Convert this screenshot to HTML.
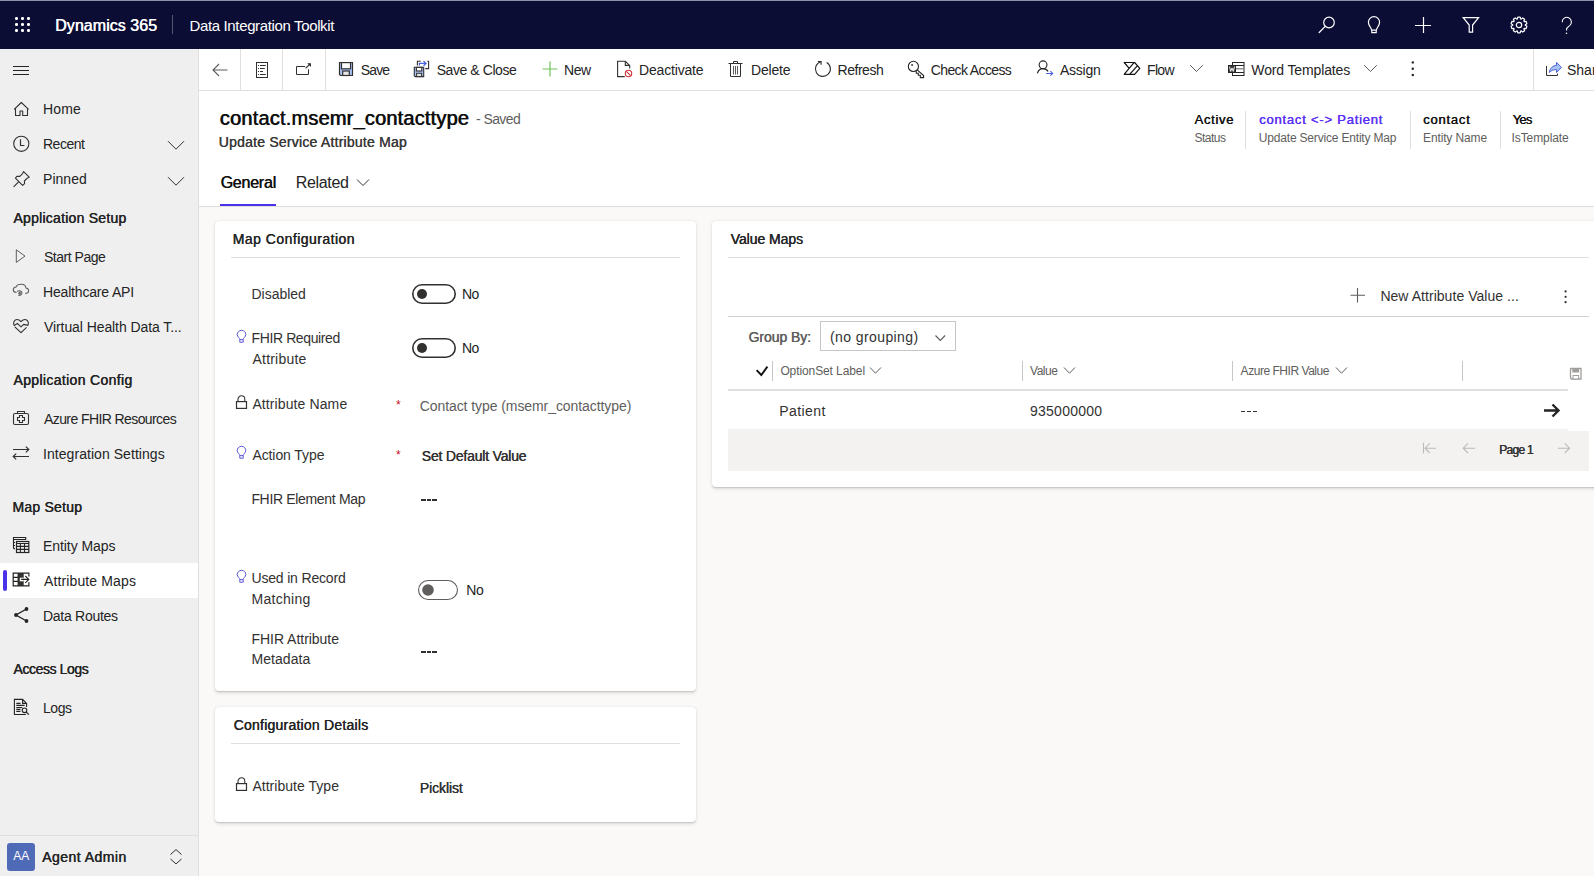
<!DOCTYPE html>
<html><head><meta charset="utf-8"><title>Dynamics 365</title>
<style>
*{box-sizing:border-box;margin:0;padding:0}
html,body{width:1594px;height:876px;overflow:hidden;background:#faf9f8;font-family:"Liberation Sans",sans-serif;color:#242424}
.a{position:absolute;white-space:nowrap;line-height:1}
.b{position:absolute}
svg{position:absolute;overflow:visible}
</style></head><body>
<div class="b" style="left:0px;top:0px;width:1594px;height:49px;background:#0c0d35"></div>
<div class="b" style="left:0px;top:0px;width:1594px;height:1px;background:#8c93a6"></div>
<div class="b" style="left:172px;top:15px;width:1px;height:19px;background:#55566f"></div>
<div class="b" style="left:0px;top:49px;width:198px;height:827px;background:#efefef"></div>
<div class="b" style="left:198px;top:49px;width:1px;height:827px;background:#e1dfdd"></div>
<div class="b" style="left:0px;top:563px;width:198px;height:35px;background:#fff"></div>
<div class="b" style="left:3px;top:570px;width:4px;height:21px;background:#4a32ea;border-radius:2px"></div>
<div class="b" style="left:0px;top:835px;width:198px;height:1px;background:#e1dfdd"></div>
<div class="b" style="left:7px;top:843px;width:28px;height:28px;background:#4f6bb8;border-radius:3px"></div>
<div class="b" style="left:199px;top:49px;width:1395px;height:41px;background:#fff"></div>
<div class="b" style="left:199px;top:90px;width:1395px;height:1px;background:#e1dfdd"></div>
<div class="b" style="left:240px;top:49px;width:1px;height:41px;background:#e1dfdd"></div>
<div class="b" style="left:282px;top:49px;width:1px;height:41px;background:#e1dfdd"></div>
<div class="b" style="left:325px;top:49px;width:1px;height:41px;background:#e1dfdd"></div>
<div class="b" style="left:1533px;top:49px;width:1px;height:41px;background:#e1dfdd"></div>
<div class="b" style="left:199px;top:91px;width:1395px;height:115px;background:#fff"></div>
<div class="b" style="left:199px;top:206px;width:1395px;height:1px;background:#e1dfdd"></div>
<div class="b" style="left:220px;top:203.5px;width:56px;height:2.5px;background:#4a32ea"></div>
<div class="b" style="left:1245px;top:111px;width:1px;height:38px;background:#e1dfdd"></div>
<div class="b" style="left:1410px;top:111px;width:1px;height:38px;background:#e1dfdd"></div>
<div class="b" style="left:1500px;top:111px;width:1px;height:38px;background:#e1dfdd"></div>
<div class="b" style="left:215px;top:221px;width:481px;height:470px;background:#fff;border-radius:4px;box-shadow:0 1.6px 3.6px rgba(0,0,0,.13),0 0.3px 0.9px rgba(0,0,0,.11)"></div>
<div class="b" style="left:215px;top:707px;width:481px;height:115px;background:#fff;border-radius:4px;box-shadow:0 1.6px 3.6px rgba(0,0,0,.13),0 0.3px 0.9px rgba(0,0,0,.11)"></div>
<div class="b" style="left:712px;top:221px;width:893px;height:266px;background:#fff;border-radius:4px;box-shadow:0 1.6px 3.6px rgba(0,0,0,.13),0 0.3px 0.9px rgba(0,0,0,.11)"></div>
<div class="b" style="left:231px;top:257px;width:449px;height:1px;background:#e1dfdd"></div>
<div class="b" style="left:231px;top:743px;width:449px;height:1px;background:#e1dfdd"></div>
<div class="b" style="left:728px;top:257px;width:861px;height:1px;background:#e1dfdd"></div>
<div class="b" style="left:728px;top:316px;width:861px;height:1px;background:#d2d0ce"></div>
<div class="a" style="left:396px;top:398.5px;font-size:12px;color:#c50f1f">*</div>
<div class="a" style="left:396px;top:448.5px;font-size:12px;color:#c50f1f">*</div>
<div class="b" style="left:421px;top:499px;width:4.6px;height:2px;background:#323130"></div>
<div class="b" style="left:426.8px;top:499px;width:4.3px;height:2px;background:#323130"></div>
<div class="b" style="left:432.4px;top:499px;width:4.5px;height:2px;background:#323130"></div>
<div class="b" style="left:421px;top:651px;width:4.6px;height:2px;background:#323130"></div>
<div class="b" style="left:426.8px;top:651px;width:4.3px;height:2px;background:#323130"></div>
<div class="b" style="left:432.4px;top:651px;width:4.5px;height:2px;background:#323130"></div>
<div class="b" style="left:820px;top:321px;width:136px;height:30px;border:1px solid #c8c6c4;background:#fff"></div>
<div class="b" style="left:772px;top:361px;width:1px;height:20px;background:#c8c6c4"></div>
<div class="b" style="left:1022px;top:361px;width:1px;height:20px;background:#c8c6c4"></div>
<div class="b" style="left:1232px;top:361px;width:1px;height:20px;background:#c8c6c4"></div>
<div class="b" style="left:1462px;top:361px;width:1px;height:20px;background:#c8c6c4"></div>
<div class="b" style="left:728px;top:389px;width:840px;height:2px;background:#e1dfdd"></div>
<div class="b" style="left:1241px;top:410.8px;width:4.1px;height:1.3px;background:#323130"></div>
<div class="b" style="left:1246.9px;top:410.8px;width:4.1px;height:1.3px;background:#323130"></div>
<div class="b" style="left:1252.8px;top:410.8px;width:4.2px;height:1.3px;background:#323130"></div>
<div class="b" style="left:728px;top:429px;width:840px;height:41.5px;background:#f3f2f1"></div>
<div class="b" style="left:1568px;top:431px;width:21px;height:39.5px;background:#f3f2f1"></div>
<svg style="left:0px;top:0px" width="48" height="48" viewBox="0 0 48 48"><rect x="15" y="17" width="3" height="3" rx="1.2" fill="#fff"/><rect x="15" y="23" width="3" height="3" rx="1.2" fill="#fff"/><rect x="15" y="29" width="3" height="3" rx="1.2" fill="#fff"/><rect x="21" y="17" width="3" height="3" rx="1.2" fill="#fff"/><rect x="21" y="23" width="3" height="3" rx="1.2" fill="#fff"/><rect x="21" y="29" width="3" height="3" rx="1.2" fill="#fff"/><rect x="27" y="17" width="3" height="3" rx="1.2" fill="#fff"/><rect x="27" y="23" width="3" height="3" rx="1.2" fill="#fff"/><rect x="27" y="29" width="3" height="3" rx="1.2" fill="#fff"/></svg>
<svg style="left:1317px;top:15px" width="20" height="20" viewBox="0 0 20 20"><circle cx="12" cy="7.5" r="5.3" fill="none" stroke="#fff" stroke-width="1.2"/><path d="M8.2 11.3 L2.2 17.5" fill="none" stroke="#fff" stroke-width="1.2" stroke-linecap="round"/></svg>
<svg style="left:1366px;top:15px" width="16" height="20" viewBox="0 0 16 20"><path d="M5.6 15.2 C5.6 12.6 2.4 11 2.4 7.3 A5.6 5.6 0 0 1 13.6 7.3 C13.6 11 10.4 12.6 10.4 15.2 Z" fill="none" stroke="#fff" stroke-width="1.2"/><path d="M5.8 15.5 v2.2 h4.4 v-2.2" fill="none" stroke="#fff" stroke-width="1.2"/></svg>
<svg style="left:1414px;top:16px" width="18" height="18" viewBox="0 0 18 18"><path d="M9.5 1 V17 M1 9.5 H17" fill="none" stroke="#fff" stroke-width="1.2"/></svg>
<svg style="left:1462px;top:16px" width="18" height="18" viewBox="0 0 18 18"><path d="M1.2 1.6 H16.6 L10.6 9 V16.2 H7.2 V9 Z" fill="none" stroke="#fff" stroke-width="1.2"/></svg>
<svg style="left:1510px;top:16px" width="18" height="18" viewBox="0 0 18 18"><path d="M7.37 2.91 L7.82 1.09 L10.18 1.09 L10.63 2.91 L11.26 3.12 L12.69 1.90 L14.61 3.29 L13.90 5.04 L14.28 5.57 L16.16 5.43 L16.89 7.68 L15.29 8.67 L15.29 9.33 L16.89 10.32 L16.16 12.57 L14.28 12.43 L13.90 12.96 L14.61 14.71 L12.69 16.10 L11.26 14.88 L10.63 15.09 L10.18 16.91 L7.82 16.91 L7.37 15.09 L6.74 14.88 L5.31 16.10 L3.39 14.71 L4.10 12.96 L3.72 12.43 L1.84 12.57 L1.11 10.32 L2.71 9.33 L2.71 8.67 L1.11 7.68 L1.84 5.43 L3.72 5.57 L4.10 5.04 L3.39 3.29 L5.31 1.90 L6.74 3.12 Z" fill="none" stroke="#fff" stroke-width="1.2" stroke-linejoin="round"/><circle cx="9" cy="9" r="2.7" fill="none" stroke="#fff" stroke-width="1.2"/></svg>
<svg style="left:1560px;top:16.5px" width="14" height="20" viewBox="0 0 14 20"><path d="M2.2 5.2 A4.6 4.6 0 1 1 9.6 8.6 C7.6 10 6.5 11 6.5 12.6 V13.6" fill="none" stroke="#fff" stroke-width="1.1"/><circle cx="6.5" cy="16.2" r="0.8" fill="#fff"/></svg>
<svg style="left:12px;top:64px" width="18" height="12" viewBox="0 0 18 12"><path d="M1 2.5 H17 M1 6.5 H17 M1 10.5 H17" stroke="#242424" stroke-width="1"/></svg>
<svg style="left:12px;top:100px" width="18" height="18" viewBox="0 0 18 18"><path d="M2.2 9.3 L9.3 2.5 L16.6 9.3 M3.5 8 V15.5 H8 V11 H10.7 V15.5 H15.5 V8" fill="none" stroke="#323130" stroke-width="1.1" stroke-linejoin="round"/></svg>
<svg style="left:12px;top:135px" width="18" height="18" viewBox="0 0 18 18"><circle cx="9.3" cy="8.8" r="7.6" fill="none" stroke="#323130" stroke-width="1.1"/><path d="M8.5 4.3 V10.5 H12.4" fill="none" stroke="#323130" stroke-width="1.2"/></svg>
<svg style="left:12px;top:170px" width="18" height="18" viewBox="0 0 18 18"><path d="M11.6 1.6 L17.2 7.2 L15.2 8.2 L12.4 11 L12.6 13.6 L10.6 15.4 L3.4 8.2 L5.2 6.2 L7.8 6.4 L10.6 3.6 Z M6.6 11.8 L1.6 16.8" fill="none" stroke="#323130" stroke-width="1.1" stroke-linejoin="round"/></svg>
<svg style="left:167px;top:140px" width="18" height="11" viewBox="0 0 18 11"><path d="M1 1.2 L9 9.2 L17 1.2" fill="none" stroke="#323130" stroke-width="1"/></svg>
<svg style="left:167px;top:175.5px" width="18" height="11" viewBox="0 0 18 11"><path d="M1 1.2 L9 9.2 L17 1.2" fill="none" stroke="#323130" stroke-width="1"/></svg>
<svg style="left:14px;top:248px" width="14" height="16" viewBox="0 0 14 16"><path d="M2.3 1.8 V14.4 L11 8.1 Z" fill="none" stroke="#605e5c" stroke-width="1"/></svg>
<svg style="left:12px;top:282px" width="18" height="17" viewBox="0 0 18 17"><path d="M4.5 10.5 C2.5 10.5 1.3 9.2 1.3 7.8 C1.3 6.2 2.4 5.2 4 5 C4.6 3.3 6.5 2.3 9.6 2.3 C12 2.3 13.6 4 14 6 C15.6 6.2 16.6 7.4 16.6 8.8 C16.6 10.2 15.4 11.4 13.3 11.4" fill="none" stroke="#605e5c" stroke-width="1.1"/><path d="M5.2 9.6 C6.2 8.4 9.6 8.5 9.9 10.6 C10.1 12.6 8.5 13.6 6.4 13.4" fill="none" stroke="#605e5c" stroke-width="1.1"/><circle cx="7.6" cy="11.4" r="1.3" fill="#605e5c"/></svg>
<svg style="left:12px;top:318px" width="18" height="16" viewBox="0 0 18 16"><path d="M2 7.2 C0.8 4.5 2.5 1.5 5 1.5 C6.8 1.5 8 2.5 9 3.6 C10 2.5 11.2 1.5 13 1.5 C15.5 1.5 17.2 4.5 16 7.4 M2 7.8 L5.3 5.4 L9 8.8 L11.6 6.4 L16.2 7.4 M2.8 8.8 L9 14.7 L14.6 9.4" fill="none" stroke="#323130" stroke-width="1.1" stroke-linejoin="round"/></svg>
<svg style="left:12px;top:410px" width="18" height="16" viewBox="0 0 18 16"><rect x="1.5" y="3.5" width="15" height="11" rx="1.5" fill="none" stroke="#323130" stroke-width="1.1"/><path d="M5.5 3.5 V1.5 H12.5 V3.5 M7.5 5.5 H10.5 V7.5 H12.5 V10.5 H10.5 V12.5 H7.5 V10.5 H5.5 V7.5 H7.5 Z" fill="none" stroke="#323130" stroke-width="1.1"/></svg>
<svg style="left:12px;top:444px" width="18" height="18" viewBox="0 0 18 18"><path d="M1 5.5 H16.6 M13.8 2.6 L16.8 5.5 L13.8 8.4 M17 12.5 H1.4 M4.2 9.6 L1.2 12.5 L4.2 15.4" fill="none" stroke="#323130" stroke-width="1.2"/></svg>
<svg style="left:12px;top:536px" width="18" height="18" viewBox="0 0 18 18"><path d="M1.5 12.6 V1.5 H13.7 V3.5 H1.5 M1.5 6.5 H3 M1.5 9.5 H3 M1.5 12.6 H3" fill="none" stroke="#242424" stroke-width="1.1"/><rect x="4.5" y="5.5" width="12.3" height="11" fill="#efefef" stroke="#242424" stroke-width="1.2"/><path d="M4.5 7.5 H16.8 M4.5 10.4 H16.8 M4.5 13.4 H16.8 M8.4 7.5 V16.5 M12.5 7.5 V16.5" fill="none" stroke="#242424" stroke-width="1.1"/></svg>
<svg style="left:12px;top:572px" width="18" height="16" viewBox="0 0 18 16"><rect x="6.2" y="1.1" width="5.5" height="12.7" fill="#323130"/><rect x="7.8" y="5.7" width="3.9" height="3.6" fill="#fff"/><path d="M16.9 4.5 V1.1 H1.2 V13.8 H16.9 V10.2 M1.2 5.3 H6.2 M1.2 9.4 H6.2 M6.2 1.1 V13.8" fill="none" stroke="#242424" stroke-width="1.2"/><path d="M9.1 7.4 H16.4 M13.3 4 L16.8 7.4 L13.3 10.8" fill="none" stroke="#242424" stroke-width="1.1"/></svg>
<svg style="left:12px;top:606px" width="18" height="18" viewBox="0 0 18 18"><path d="M14.5 3 L4 9 L14.5 15" fill="none" stroke="#242424" stroke-width="1.4"/><circle cx="14.5" cy="3" r="1.9" fill="#242424"/><circle cx="4" cy="9" r="1.9" fill="#242424"/><circle cx="14.5" cy="15" r="1.9" fill="#242424"/></svg>
<svg style="left:12px;top:698px" width="18" height="18" viewBox="0 0 18 18"><path d="M13.9 16.5 H2.4 V1.4 H10.6 L14.6 5.4 V9 M10.6 1.4 V5.4 H14.6 M4.3 5.4 H8.5 M4.3 7.4 H12.6 M4.3 9.5 H10.3 M4.3 11.4 H8.5 M4.3 13.4 H8.5" fill="none" stroke="#242424" stroke-width="1.1"/><circle cx="12.5" cy="12.3" r="2.3" fill="#efefef" stroke="#242424" stroke-width="1.1"/><path d="M14.1 14 L16.9 16.6" stroke="#242424" stroke-width="1.2"/></svg>
<svg style="left:168px;top:848px" width="16" height="18" viewBox="0 0 16 18"><path d="M2.5 6.5 L8 1.6 L13.5 6.5 M2.5 11 L8 15.9 L13.5 11" fill="none" stroke="#323130" stroke-width="1"/></svg>
<svg style="left:211px;top:62px" width="18" height="16" viewBox="0 0 18 16"><path d="M2 8 H16.5 M8 2 L2 8 L8 14" fill="none" stroke="#605e5c" stroke-width="1.1"/></svg>
<svg style="left:254px;top:61px" width="16" height="18" viewBox="0 0 16 18"><rect x="2.5" y="1.5" width="11" height="15" fill="none" stroke="#323130" stroke-width="1"/><path d="M4 4.5 H5 M4 7.5 H5 M4 10.5 H5 M4 13.5 H5 M6 4.5 H11.8 M6 7.5 H10.8 M6 10.5 H9 M6 13.5 H11.8" stroke="#323130" stroke-width="1"/></svg>
<svg style="left:294px;top:61px" width="20" height="16" viewBox="0 0 20 16"><path d="M11.2 5.5 H2.5 V13.5 H14.5 V8.3" fill="none" stroke="#323130" stroke-width="1"/><path d="M11.6 7.4 L16 3" stroke="#323130" stroke-width="1.1"/><path d="M13.2 2.2 H17 V6 Z" fill="#323130"/></svg>
<svg style="left:338px;top:61px" width="16" height="16" viewBox="0 0 16 16"><path d="M1.5 1.5 H14.5 V14.5 H2.5 L1.5 13.5 Z" fill="#a6c1f2" stroke="#323130" stroke-width="1.2"/><rect x="3.5" y="1.6" width="9" height="6.2" fill="#fff" stroke="#323130" stroke-width="1.2"/><rect x="4.7" y="10" width="6.6" height="4.5" fill="#e6e6e6" stroke="#323130" stroke-width="1.2"/></svg>
<svg style="left:412px;top:59px" width="20" height="20" viewBox="0 0 20 20"><path d="M2.3 8.2 H11.7 V17.6 H3.2 L2.3 16.7 Z" fill="#a6c1f2" stroke="#323130" stroke-width="1.1"/><rect x="4.4" y="8.4" width="5.4" height="3.6" fill="#fff" stroke="#323130" stroke-width="1.1"/><rect x="4.6" y="14.3" width="5" height="3.3" fill="#e6e6e6" stroke="#323130" stroke-width="1"/><path d="M5.4 6.5 V2.3 H8.7 M15.3 2.3 H16.6 V9.6 H13.3" fill="none" stroke="#323130" stroke-width="1.1"/><path d="M7.4 6.5 V4.4 H14 M11.5 2 L14.1 4.4 L11.5 6.8" fill="none" stroke="#4a62d8" stroke-width="1.2"/></svg>
<svg style="left:541px;top:60px" width="18" height="18" viewBox="0 0 18 18"><path d="M9 1.5 V16.5 M1.5 9 H16.5" stroke="#6fc45a" stroke-width="1.2"/></svg>
<svg style="left:616px;top:60px" width="18" height="18" viewBox="0 0 18 18"><path d="M8.8 16.6 H1.6 V1.3 H9.3 L13.7 5.4 V8.6 M9.3 1.3 V5.4 H13.7" fill="none" stroke="#323130" stroke-width="1.1"/><circle cx="12.5" cy="13.5" r="3.2" fill="#fff" stroke="#d13438" stroke-width="1.1"/><path d="M10.3 11.3 L14.7 15.7" stroke="#d13438" stroke-width="1.1"/></svg>
<svg style="left:727px;top:60px" width="18" height="18" viewBox="0 0 18 18"><path d="M3.5 4 V16.5 H13.5 V4 M1.5 3.5 H15.5 M6.5 3.5 V1.5 H10.5 V3.5" fill="none" stroke="#323130" stroke-width="1"/><path d="M6.5 6 V14.5 M8.5 6 V14.5 M10.5 6 V14.5" stroke="#323130" stroke-width="0.8"/></svg>
<svg style="left:813px;top:60px" width="18" height="18" viewBox="0 0 18 18"><path d="M13.65 2.4 A7.5 7.5 0 1 1 7.96 1.66" fill="none" stroke="#323130" stroke-width="1.1"/><path d="M4.8 1.5 H8.1 V4.8" fill="none" stroke="#323130" stroke-width="1.1"/></svg>
<svg style="left:906px;top:60px" width="20" height="18" viewBox="0 0 20 18"><circle cx="7.4" cy="6.4" r="5.1" fill="none" stroke="#242424" stroke-width="1.1"/><rect x="5.3" y="4.2" width="1.6" height="1.6" fill="#242424"/><path d="M11.2 9.8 L17.6 15.6 V17.6 H14.3 V15.3 H12.3 V13.3 H10.3 V11.2" fill="none" stroke="#242424" stroke-width="1.1"/></svg>
<svg style="left:1036px;top:60px" width="20" height="18" viewBox="0 0 20 18"><circle cx="7.05" cy="4.8" r="3.9" fill="none" stroke="#242424" stroke-width="1.1"/><path d="M1.4 13.3 C2.4 10 4.6 8.6 7 8.6 C9 8.6 11 9.6 12.1 11.6" fill="none" stroke="#242424" stroke-width="1.1"/><path d="M10.1 13.45 H16.6 M14.4 11.2 L16.7 13.45 L14.4 15.7" fill="none" stroke="#4a62d8" stroke-width="1.1"/></svg>
<svg style="left:1122px;top:60px" width="20" height="18" viewBox="0 0 20 18"><path d="M2.2 2.5 H12.6 L17.8 8.4 L12.6 14.3 H2.3 M2.2 2.5 L6.8 7.8 M12 2.6 L2.3 14.1 M15.1 6.1 L7.6 14.3" fill="none" stroke="#111" stroke-width="1.2" stroke-linejoin="round" stroke-linecap="round"/></svg>
<svg style="left:1189px;top:64px" width="16" height="10" viewBox="0 0 16 10"><path d="M1.2 1.2 L7.5 7.5 L13.8 1.2" fill="none" stroke="#605e5c" stroke-width="1"/></svg>
<svg style="left:1226px;top:60px" width="20" height="18" viewBox="0 0 20 18"><rect x="6.5" y="2.5" width="11.5" height="13" fill="#fff" stroke="#242424" stroke-width="1"/><path d="M6.5 5.5 H18 M6.5 12.5 H18" stroke="#242424" stroke-width="1"/><path d="M9.5 8.8 H17.5" stroke="#808080" stroke-width="1.3"/><rect x="2.5" y="5.5" width="7" height="7" fill="#3a3a3a" stroke="#242424" stroke-width="1"/><path d="M3.5 6.6 L4.7 11.4 L6 8 L7.3 11.4 L8.5 6.6" fill="none" stroke="#fff" stroke-width="0.9"/></svg>
<svg style="left:1363px;top:64px" width="16" height="10" viewBox="0 0 16 10"><path d="M1.2 1.2 L7.5 7.5 L13.8 1.2" fill="none" stroke="#605e5c" stroke-width="1"/></svg>
<svg style="left:1410px;top:60px" width="6" height="18" viewBox="0 0 6 18"><circle cx="2.8" cy="2.4" r="1.2" fill="#242424"/><circle cx="2.8" cy="8.7" r="1.2" fill="#242424"/><circle cx="2.8" cy="15" r="1.2" fill="#242424"/></svg>
<svg style="left:1544px;top:60px" width="20" height="18" viewBox="0 0 20 18"><path d="M2.5 6 V15.5 H13.5 V13.6" fill="none" stroke="#323130" stroke-width="1"/><path d="M5.3 12.5 C5.8 8.5 8.5 5.6 12.5 5.3 V2.3 L17.4 7.4 L12.5 12.5 V9.6 C9.5 9.6 7 10.5 5.3 12.5 Z" fill="#a6c1f2" stroke="#4a62d8" stroke-width="1" stroke-linejoin="round"/></svg>
<svg style="left:356px;top:178px" width="14" height="10" viewBox="0 0 14 10"><path d="M1 1.5 L7 7.5 L13 1.5" fill="none" stroke="#323130" stroke-width="1"/></svg>
<svg style="left:412px;top:284px" width="44" height="20" viewBox="0 0 44 20"><rect x="0.8" y="0.8" width="42.4" height="18.4" rx="9.2" fill="#fff" stroke="#323130" stroke-width="1.6"/><circle cx="10" cy="10.0" r="5" fill="#323130"/></svg>
<svg style="left:412px;top:338px" width="44" height="20" viewBox="0 0 44 20"><rect x="0.8" y="0.8" width="42.4" height="18.4" rx="9.2" fill="#fff" stroke="#323130" stroke-width="1.6"/><circle cx="10" cy="10.0" r="5" fill="#323130"/></svg>
<svg style="left:418px;top:580px" width="40" height="20" viewBox="0 0 40 20"><rect x="0.55" y="0.55" width="38.9" height="18.9" rx="9.45" fill="#fff" stroke="#605e5c" stroke-width="1.1"/><circle cx="10" cy="10.0" r="5.8" fill="#605e5c"/></svg>
<svg style="left:235.8px;top:329.5px" width="12" height="14" viewBox="0 0 12 14"><path d="M3.8 9.6 C3.8 8 1.2 6.8 1.2 4.6 A4.3 4.3 0 0 1 9.8 4.6 C9.8 6.8 7.2 8 7.2 9.6 Z" fill="none" stroke="#5a55d6" stroke-width="1"/><path d="M3.8 9.6 V12.2 H7.2 V9.6" fill="none" stroke="#5a55d6" stroke-width="1"/></svg>
<svg style="left:235.8px;top:445.5px" width="12" height="14" viewBox="0 0 12 14"><path d="M3.8 9.6 C3.8 8 1.2 6.8 1.2 4.6 A4.3 4.3 0 0 1 9.8 4.6 C9.8 6.8 7.2 8 7.2 9.6 Z" fill="none" stroke="#5a55d6" stroke-width="1"/><path d="M3.8 9.6 V12.2 H7.2 V9.6" fill="none" stroke="#5a55d6" stroke-width="1"/></svg>
<svg style="left:235.8px;top:569.5px" width="12" height="14" viewBox="0 0 12 14"><path d="M3.8 9.6 C3.8 8 1.2 6.8 1.2 4.6 A4.3 4.3 0 0 1 9.8 4.6 C9.8 6.8 7.2 8 7.2 9.6 Z" fill="none" stroke="#5a55d6" stroke-width="1"/><path d="M3.8 9.6 V12.2 H7.2 V9.6" fill="none" stroke="#5a55d6" stroke-width="1"/></svg>
<svg style="left:235px;top:395px" width="13" height="15" viewBox="0 0 13 15"><path d="M3 6.2 V4.2 A3.4 3.4 0 0 1 9.8 4.2 V6.2" fill="none" stroke="#323130" stroke-width="1.1"/><rect x="1.5" y="6.6" width="10" height="6.8" fill="none" stroke="#323130" stroke-width="1.2"/></svg>
<svg style="left:235px;top:777px" width="13" height="15" viewBox="0 0 13 15"><path d="M3 6.2 V4.2 A3.4 3.4 0 0 1 9.8 4.2 V6.2" fill="none" stroke="#323130" stroke-width="1.1"/><rect x="1.5" y="6.6" width="10" height="6.8" fill="none" stroke="#323130" stroke-width="1.2"/></svg>
<svg style="left:1349px;top:286px" width="18" height="18" viewBox="0 0 18 18"><path d="M8.5 2 V16.5 M1.5 9.2 H16" stroke="#605e5c" stroke-width="1.1"/></svg>
<svg style="left:1563px;top:289px" width="6" height="16" viewBox="0 0 6 16"><circle cx="2.6" cy="2.4" r="1.1" fill="#323130"/><circle cx="2.6" cy="7.8" r="1.1" fill="#323130"/><circle cx="2.6" cy="13.2" r="1.1" fill="#323130"/></svg>
<svg style="left:934px;top:334px" width="13" height="9" viewBox="0 0 13 9"><path d="M1.5 1.5 L6.3 6.3 L11.1 1.5" fill="none" stroke="#605e5c" stroke-width="1.2"/></svg>
<svg style="left:755px;top:364px" width="14" height="13" viewBox="0 0 14 13"><path d="M1.6 6.1 L6.3 11 L12.4 2.6" fill="none" stroke="#111" stroke-width="1.9"/></svg>
<svg style="left:869px;top:366px" width="14" height="10" viewBox="0 0 14 10"><path d="M1 1.5 L6.5 7.2 L12 1.5" fill="none" stroke="#605e5c" stroke-width="1"/></svg>
<svg style="left:1063px;top:366px" width="14" height="10" viewBox="0 0 14 10"><path d="M1 1.5 L6.5 7.2 L12 1.5" fill="none" stroke="#605e5c" stroke-width="1"/></svg>
<svg style="left:1335px;top:366px" width="14" height="10" viewBox="0 0 14 10"><path d="M1 1.5 L6.5 7.2 L12 1.5" fill="none" stroke="#605e5c" stroke-width="1"/></svg>
<svg style="left:1569px;top:367px" width="14" height="14" viewBox="0 0 14 14"><path d="M1.5 1.5 H12 V12 H2.5 L1.5 11 Z" fill="#fff" stroke="#a19f9d" stroke-width="1.3"/><rect x="3.3" y="1.5" width="6.8" height="4" fill="#a19f9d"/><rect x="4" y="8.5" width="5.6" height="3.5" fill="#fff" stroke="#a19f9d" stroke-width="1"/></svg>
<svg style="left:1542px;top:402px" width="20" height="16" viewBox="0 0 20 16"><path d="M2 8.5 H16.5 M10.5 2.5 L16.5 8.5 L10.5 14.5" fill="none" stroke="#242424" stroke-width="2.4"/></svg>
<svg style="left:1421px;top:441px" width="16" height="14" viewBox="0 0 16 14"><path d="M2.5 1.8 V12.6 M4 7.2 H15 M8.8 2.4 L4 7.2 L8.8 12" fill="none" stroke="#bdbbb8" stroke-width="1.1"/></svg>
<svg style="left:1461px;top:441px" width="16" height="14" viewBox="0 0 16 14"><path d="M2.2 7.2 H14 M7 2.4 L2.2 7.2 L7 12" fill="none" stroke="#bdbbb8" stroke-width="1.1"/></svg>
<svg style="left:1556px;top:441px" width="16" height="14" viewBox="0 0 16 14"><path d="M1.8 7.2 H13.6 M8.8 2.4 L13.6 7.2 L8.8 12" fill="none" stroke="#bdbbb8" stroke-width="1.1"/></svg>
<div class="a" style="left:55.00px;top:18px;font-size:16px;color:#fff;text-shadow:0.5px 0 0 #fff;letter-spacing:0.048px">Dynamics 365</div>
<div class="a" style="left:189.50px;top:18px;font-size:15px;color:#fff;letter-spacing:-0.359px">Data Integration Toolkit</div>
<div class="a" style="left:43.00px;top:102px;font-size:14px;color:#242424;letter-spacing:0.147px">Home</div>
<div class="a" style="left:43.00px;top:137px;font-size:14px;color:#242424;letter-spacing:-0.494px">Recent</div>
<div class="a" style="left:43.00px;top:172px;font-size:14px;color:#242424;letter-spacing:0.039px">Pinned</div>
<div class="a" style="left:44.00px;top:250px;font-size:14px;color:#242424;letter-spacing:-0.485px">Start Page</div>
<div class="a" style="left:43.00px;top:285px;font-size:14px;color:#242424;letter-spacing:-0.175px">Healthcare API</div>
<div class="a" style="left:44.00px;top:320px;font-size:14px;color:#242424;letter-spacing:-0.083px">Virtual Health Data T...</div>
<div class="a" style="left:44.00px;top:412px;font-size:14px;color:#242424;letter-spacing:-0.591px">Azure FHIR Resources</div>
<div class="a" style="left:43.00px;top:447px;font-size:14px;color:#242424;letter-spacing:0.056px">Integration Settings</div>
<div class="a" style="left:43.00px;top:539px;font-size:14px;color:#242424;letter-spacing:-0.074px">Entity Maps</div>
<div class="a" style="left:44.00px;top:574px;font-size:14px;color:#242424;letter-spacing:0.126px">Attribute Maps</div>
<div class="a" style="left:43.00px;top:609px;font-size:14px;color:#242424;letter-spacing:-0.282px">Data Routes</div>
<div class="a" style="left:43.00px;top:701px;font-size:14px;color:#242424;letter-spacing:-0.453px">Logs</div>
<div class="a" style="left:13.30px;top:211px;font-size:14px;color:#242424;text-shadow:0.4px 0 0 #242424;letter-spacing:0.239px">Application Setup</div>
<div class="a" style="left:13.30px;top:373px;font-size:14px;color:#242424;text-shadow:0.4px 0 0 #242424;letter-spacing:0.349px">Application Config</div>
<div class="a" style="left:12.30px;top:500px;font-size:14px;color:#242424;text-shadow:0.4px 0 0 #242424;letter-spacing:0.222px">Map Setup</div>
<div class="a" style="left:13.30px;top:662px;font-size:14px;color:#242424;text-shadow:0.4px 0 0 #242424;letter-spacing:-0.407px">Access Logs</div>
<div class="a" style="left:13.20px;top:850px;font-size:12px;color:#fff">AA</div>
<div class="a" style="left:42.00px;top:850px;font-size:14px;color:#242424;text-shadow:0.4px 0 0 #242424;letter-spacing:0.463px">Agent Admin</div>
<div class="a" style="left:360.70px;top:63px;font-size:14px;color:#242424;letter-spacing:-0.840px">Save</div>
<div class="a" style="left:436.70px;top:63px;font-size:14px;color:#242424;letter-spacing:-0.430px">Save & Close</div>
<div class="a" style="left:564.00px;top:63px;font-size:14px;color:#242424;letter-spacing:-0.448px">New</div>
<div class="a" style="left:639.00px;top:63px;font-size:14px;color:#242424;letter-spacing:-0.173px">Deactivate</div>
<div class="a" style="left:751.00px;top:63px;font-size:14px;color:#242424;letter-spacing:-0.197px">Delete</div>
<div class="a" style="left:837.50px;top:63px;font-size:14px;color:#242424;letter-spacing:-0.456px">Refresh</div>
<div class="a" style="left:930.80px;top:63px;font-size:14px;color:#242424;letter-spacing:-0.627px">Check Access</div>
<div class="a" style="left:1060.00px;top:63px;font-size:14px;color:#242424;letter-spacing:-0.247px">Assign</div>
<div class="a" style="left:1147.00px;top:63px;font-size:14px;color:#242424;letter-spacing:-0.649px">Flow</div>
<div class="a" style="left:1251.30px;top:63px;font-size:14px;color:#242424;letter-spacing:-0.130px">Word Templates</div>
<div class="a" style="left:1567.00px;top:63px;font-size:14px;color:#242424">Share</div>
<div class="a" style="left:219.60px;top:108px;font-size:20px;color:#111;text-shadow:0.7px 0 0 #111;letter-spacing:0.191px">contact.msemr_contacttype</div>
<div class="a" style="left:476.00px;top:112px;font-size:14px;color:#605e5c;letter-spacing:-0.577px">- Saved</div>
<div class="a" style="left:218.60px;top:135px;font-size:14px;color:#3b3a39;text-shadow:0.4px 0 0 #3b3a39;letter-spacing:0.219px">Update Service Attribute Map</div>
<div class="a" style="left:1194.40px;top:113px;font-size:13px;color:#111;text-shadow:0.4px 0 0 #111;letter-spacing:0.686px">Active</div>
<div class="a" style="left:1194.40px;top:132px;font-size:12px;color:#605e5c;letter-spacing:-0.484px">Status</div>
<div class="a" style="left:1259.02px;top:113px;font-size:13px;color:#5a2ff5;text-shadow:0.4px 0 0 #5a2ff5;letter-spacing:0.780px">contact &lt;-&gt; Patient</div>
<div class="a" style="left:1258.80px;top:132px;font-size:12px;color:#605e5c;letter-spacing:-0.183px">Update Service Entity Map</div>
<div class="a" style="left:1423.01px;top:113px;font-size:13px;color:#111;text-shadow:0.4px 0 0 #111;letter-spacing:0.780px">contact</div>
<div class="a" style="left:1423.00px;top:132px;font-size:12px;color:#605e5c;letter-spacing:-0.128px">Entity Name</div>
<div class="a" style="left:1512.53px;top:113px;font-size:13px;color:#111;text-shadow:0.4px 0 0 #111;letter-spacing:-0.780px">Yes</div>
<div class="a" style="left:1511.60px;top:132px;font-size:12px;color:#605e5c;letter-spacing:-0.106px">IsTemplate</div>
<div class="a" style="left:220.40px;top:175px;font-size:16px;color:#111;text-shadow:0.5px 0 0 #111;letter-spacing:-0.228px">General</div>
<div class="a" style="left:295.70px;top:175px;font-size:16px;color:#242424;letter-spacing:-0.325px">Related</div>
<div class="a" style="left:232.60px;top:232px;font-size:14px;color:#242424;text-shadow:0.4px 0 0 #242424;letter-spacing:0.462px">Map Configuration</div>
<div class="a" style="left:251.50px;top:287px;font-size:14px;color:#323130;letter-spacing:-0.027px">Disabled</div>
<div class="a" style="left:462.00px;top:287px;font-size:14px;color:#242424;letter-spacing:-0.510px">No</div>
<div class="a" style="left:251.50px;top:331px;font-size:14px;color:#323130;letter-spacing:-0.382px">FHIR Required</div>
<div class="a" style="left:252.50px;top:352px;font-size:14px;color:#323130;letter-spacing:0.206px">Attribute</div>
<div class="a" style="left:462.00px;top:341px;font-size:14px;color:#242424;letter-spacing:-0.510px">No</div>
<div class="a" style="left:252.40px;top:397px;font-size:14px;color:#323130;letter-spacing:0.109px">Attribute Name</div>
<div class="a" style="left:419.70px;top:399px;font-size:14px;color:#605e5c;letter-spacing:-0.075px">Contact type (msemr_contacttype)</div>
<div class="a" style="left:252.40px;top:448px;font-size:14px;color:#323130;letter-spacing:-0.087px">Action Type</div>
<div class="a" style="left:421.60px;top:449px;font-size:14px;color:#323130;text-shadow:0.4px 0 0 #323130;letter-spacing:-0.196px">Set Default Value</div>
<div class="a" style="left:251.40px;top:492px;font-size:14px;color:#323130;letter-spacing:-0.330px">FHIR Element Map</div>
<div class="a" style="left:251.50px;top:571px;font-size:14px;color:#323130;letter-spacing:-0.177px">Used in Record</div>
<div class="a" style="left:251.50px;top:592px;font-size:14px;color:#323130;letter-spacing:0.283px">Matching</div>
<div class="a" style="left:466.30px;top:583px;font-size:14px;color:#242424;letter-spacing:-0.510px">No</div>
<div class="a" style="left:251.50px;top:632px;font-size:14px;color:#323130;letter-spacing:-0.031px">FHIR Attribute</div>
<div class="a" style="left:251.50px;top:652px;font-size:14px;color:#323130;letter-spacing:0.059px">Metadata</div>
<div class="a" style="left:233.50px;top:718px;font-size:14px;color:#242424;text-shadow:0.4px 0 0 #242424;letter-spacing:0.227px">Configuration Details</div>
<div class="a" style="left:252.40px;top:779px;font-size:14px;color:#323130;letter-spacing:0.031px">Attribute Type</div>
<div class="a" style="left:419.70px;top:781px;font-size:14px;color:#323130;text-shadow:0.4px 0 0 #323130;letter-spacing:-0.096px">Picklist</div>
<div class="a" style="left:730.50px;top:232px;font-size:14px;color:#242424;text-shadow:0.4px 0 0 #242424;letter-spacing:-0.055px">Value Maps</div>
<div class="a" style="left:1380.40px;top:289px;font-size:14px;color:#323130;letter-spacing:0.043px">New Attribute Value ...</div>
<div class="a" style="left:748.40px;top:330px;font-size:14px;color:#605e5c;text-shadow:0.4px 0 0 #605e5c;letter-spacing:-0.067px">Group By:</div>
<div class="a" style="left:830.00px;top:330px;font-size:14px;color:#323130;letter-spacing:0.407px">(no grouping)</div>
<div class="a" style="left:780.40px;top:365px;font-size:12px;color:#605e5c;letter-spacing:-0.100px">OptionSet Label</div>
<div class="a" style="left:1030.00px;top:365px;font-size:12px;color:#605e5c;letter-spacing:-0.457px">Value</div>
<div class="a" style="left:1240.60px;top:365px;font-size:12px;color:#605e5c;letter-spacing:-0.463px">Azure FHIR Value</div>
<div class="a" style="left:779.20px;top:404px;font-size:14px;color:#323130;letter-spacing:0.417px">Patient</div>
<div class="a" style="left:1030.00px;top:404px;font-size:14px;color:#323130;letter-spacing:0.251px">935000000</div>
<div class="a" style="left:1499.07px;top:444px;font-size:12px;color:#323130;text-shadow:0.4px 0 0 #323130;letter-spacing:-0.720px">Page 1</div>
</body></html>
